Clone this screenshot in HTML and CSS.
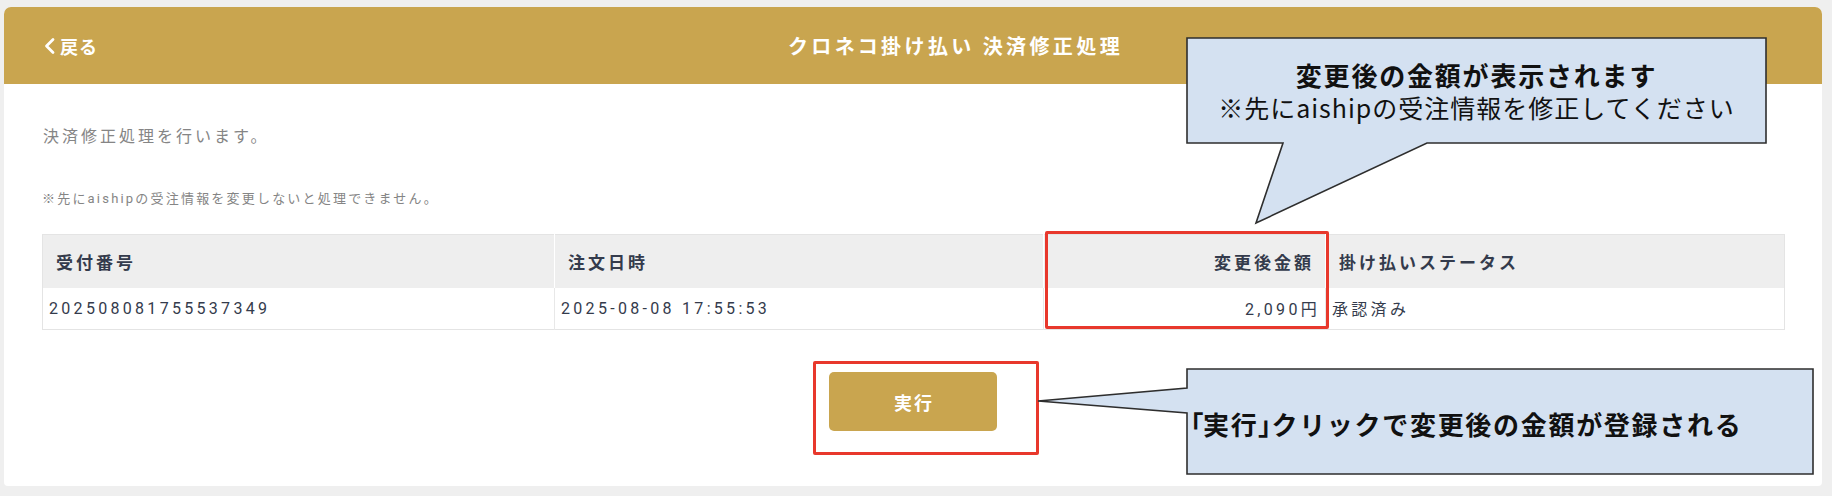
FILE: index.html
```html
<!DOCTYPE html>
<html lang="ja">
<head>
<meta charset="utf-8">
<title>クロネコ掛け払い 決済修正処理</title>
<link rel="stylesheet" href="styles.css">
</head>
<body>
<div class="page">
  <div class="card">
    <div class="card-header">
      <a class="back" href="#"><svg class="chev" width="12" height="18" viewBox="0 0 12 18"><path d="M10 2.5 L3.5 9 L10 15.5" fill="none" stroke="#fff" stroke-width="2.8" stroke-linecap="round" stroke-linejoin="round"/></svg>戻る</a>
      <h1 class="title">クロネコ掛け払い 決済修正処理</h1>
    </div>
    <div class="card-body">
      <p class="lead">決済修正処理を行います。</p>
      <p class="note">※先にaishipの受注情報を変更しないと処理できません。</p>
      <table class="orders">
        <colgroup>
          <col class="c1"><col class="c2"><col class="c3"><col class="c4">
        </colgroup>
        <thead>
          <tr><th>受付番号</th><th>注文日時</th><th class="num">変更後金額</th><th>掛け払いステータス</th></tr>
        </thead>
        <tbody>
          <tr><td>202508081755537349</td><td>2025-08-08 17:55:53</td><td class="num">2,090円</td><td>承認済み</td></tr>
        </tbody>
      </table>
      <div class="actions"><button class="run" type="button">実行</button></div>
    </div>
  </div>

  <div class="mark mark-amount"></div>
  <div class="mark mark-button"></div>

  <svg class="callouts" width="1832" height="496" viewBox="0 0 1832 496">
    <path d="M1187 38 H1766 V143 H1427 L1256 223 L1283 143 H1187 Z" fill="#d4e1f1" stroke="#2e2e2e" stroke-width="1.6" stroke-linejoin="miter"/>
    <path d="M1187 369 H1813 V474 H1187 V413 L1038 401 L1187 388 Z" fill="#d4e1f1" stroke="#2e2e2e" stroke-width="1.6" stroke-linejoin="miter"/>
  </svg>
  <div class="callout-text callout-one">
    <div class="c-strong">変更後の金額が表示されます</div>
    <div class="c-sub">※先にaishipの受注情報を修正してください</div>
  </div>
  <div class="callout-text callout-two">
    <div class="c-strong2"><span class="pb">「</span>実行<span class="pb">」</span>クリックで変更後の金額が登録される</div>
  </div>
</div>
</body>
</html>
```
FILE: styles.css
```css
* { box-sizing: border-box; }
html, body { margin: 0; padding: 0; }
body {
  background: #efefef;
  font-family: "Roboto", "Noto Sans CJK JP", sans-serif;
  width: 1832px;
  height: 496px;
  overflow: hidden;
}
.page {
  position: relative;
  width: 1832px;
  height: 496px;
  padding: 7px 10px 0 4px;
}
.card {
  background: #fff;
  border-radius: 7px 7px 4px 4px;
  overflow: hidden;
  height: 479px;
}
.card-header {
  background: #c9a54f;
  height: 77px;
  display: flex;
  align-items: center;
  padding: 0 14px 0 39px;
}
.back {
  display: flex;
  align-items: center;
  gap: 5px;
  color: #fff;
  text-decoration: none;
  font-family: "Noto Sans CJK JP", sans-serif;
  font-weight: 700;
  font-size: 18px;
  letter-spacing: 1px;
  width: 60px;
}
.chev { display: block; flex: none; }
.title {
  margin: 0 auto;
  color: #fff;
  font-family: "Noto Sans CJK JP", sans-serif;
  font-weight: 700;
  font-size: 20px;
  letter-spacing: 3.4px;
  line-height: 1;
}
.card-body {
  padding: 41px 38px 0 38px;
}
.lead {
  margin: 0 0 0 1px;
  color: #858585;
  font-size: 16px;
  letter-spacing: 3px;
  line-height: 24px;
}
.note {
  margin: 40px 0 0 0;
  color: #858585;
  font-size: 13px;
  letter-spacing: 2.2px;
  line-height: 20px;
}
.orders {
  margin-top: 25px;
  width: 1742px;
  table-layout: fixed;
  border-collapse: collapse;
  border: 1px solid #e4e4e4;
  color: #343b4c;
  font-size: 16px;
  letter-spacing: 3.3px;
}
.orders col.c1 { width: 512px; }
.orders col.c2 { width: 489px; }
.orders col.c3 { width: 282px; }
.orders col.c4 { width: 459px; }
.orders th {
  background: #eeeeee;
  height: 53px;
  padding: 0 12px 0 13px;
  text-align: left;
  font-family: "Noto Sans CJK JP", sans-serif;
  font-weight: 700;
  font-size: 17px;
  letter-spacing: 3px;
  border-right: 1px solid #fff;
}
.orders td {
  height: 42px;
  padding: 0 6px;
  border-right: 1px solid #e8e8e8;
  font-weight: 400;
}
.orders th:last-child, .orders td:last-child { border-right: 0; }
.orders th.num { text-align: right; padding-right: 11px; }
.orders td.num { text-align: right; padding-right: 5px; }
.actions {
  display: flex;
  justify-content: center;
  margin-top: 42px;
}
.run {
  width: 168px;
  height: 59px;
  border: 0;
  border-radius: 5px;
  background: #c9a54f;
  color: #fff;
  font-family: "Noto Sans CJK JP", sans-serif;
  font-weight: 700;
  font-size: 18px;
  letter-spacing: 2px;
  padding: 0 0 0 2px;
}
.mark {
  position: absolute;
  border: 3px solid #e8382c;
  border-radius: 2px;
}
.mark-amount { left: 1045px; top: 231px; width: 284px; height: 98px; }
.mark-button { left: 813px; top: 361px; width: 226px; height: 94px; }
.callouts { position: absolute; left: 0; top: 0; pointer-events: none; }
.callout-text {
  position: absolute;
  font-family: "Noto Sans CJK JP", sans-serif;
  color: #111;
}
.callout-one {
  left: 1187px;
  top: 38px;
  width: 579px;
  height: 105px;
  display: flex;
  flex-direction: column;
  align-items: center;
  justify-content: center;
}
.c-strong { font-weight: 700; font-size: 26px; letter-spacing: 1.8px; line-height: 33px; }
.c-sub { font-weight: 400; font-size: 25px; letter-spacing: 1px; line-height: 33px; }
.callout-two { left: 1190px; top: 406px; }
.c-strong2 { font-weight: 700; font-size: 26px; line-height: 36px; letter-spacing: 1.7px; }
.pb { font-feature-settings: "palt" 1; letter-spacing: 0; }
```
